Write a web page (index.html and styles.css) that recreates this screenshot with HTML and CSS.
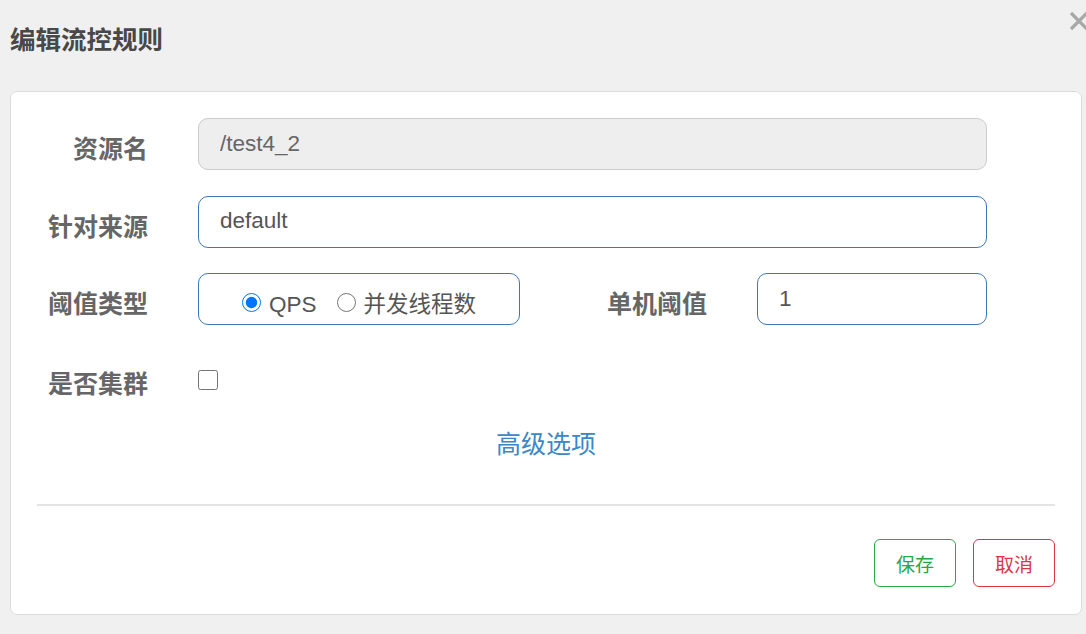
FILE: index.html
```html
<!DOCTYPE html>
<html lang="zh-CN">
<head>
<meta charset="utf-8">
<title>编辑流控规则</title>
<link rel="stylesheet" href="styles.css">
</head>
<body>
<div class="modal">
  <div class="modal-header">
    <h3 class="modal-title">编辑流控规则</h3>
    <button class="close" type="button" aria-label="关闭">
      <svg width="22" height="22" viewBox="0 0 22 22"><path d="M3 3L19 19M19 3L3 19" stroke="#a8a8a8" stroke-width="3.2" stroke-linecap="butt"/></svg>
    </button>
  </div>
  <div class="modal-body">
    <form class="rule-form">
      <div class="form-row">
        <label class="form-label">资源名</label>
        <input class="form-input wide" type="text" value="/test4_2" disabled>
      </div>
      <div class="form-row">
        <label class="form-label">针对来源</label>
        <input class="form-input wide active" type="text" value="default">
      </div>
      <div class="form-row">
        <label class="form-label">阈值类型</label>
        <div class="radio-group">
          <label class="radio"><input type="radio" name="grade" checked><span>QPS</span></label>
          <label class="radio"><input type="radio" name="grade"><span>并发线程数</span></label>
        </div>
        <label class="form-label second">单机阈值</label>
        <input class="form-input narrow active" type="text" value="1">
      </div>
      <div class="form-row check-row">
        <label class="form-label">是否集群</label>
        <input class="checkbox" type="checkbox">
      </div>
      <div class="advanced"><a href="#">高级选项</a></div>
    </form>
    <div class="divider"></div>
    <div class="actions">
      <button class="btn btn-save" type="button">保存</button>
      <button class="btn btn-cancel" type="button">取消</button>
    </div>
  </div>
</div>
</body>
</html>
```

FILE: styles.css
```css
html, body {
  margin: 0;
  padding: 0;
  background: #f0f0f0;
}

body {
  font-family: "Liberation Sans", "Noto Sans CJK SC", sans-serif;
  width: 1086px;
  height: 634px;
  overflow: hidden;
}

.modal {
  position: relative;
}

.modal-header {
  height: 91px;
  padding: 0 10px;
  box-sizing: border-box;
}

.modal-title {
  margin: 0;
  padding-top: 22px;
  font-size: 25.5px;
  line-height: 36px;
  font-weight: bold;
  color: #484848;
}

.close {
  position: absolute;
  top: 10px;
  right: -4px;
  padding: 0;
  border: 0;
  background: none;
  cursor: pointer;
}

.close svg {
  display: block;
}

.modal-body {
  margin: 0 4px 0 10px;
  height: 524px;
  box-sizing: border-box;
  background: #fff;
  border: 1px solid #dcdcdc;
  border-radius: 7px;
  padding: 26px 26px 0 26px;
}

.rule-form {
  margin: 0;
}

.form-row {
  display: flex;
  align-items: center;
  height: 52px;
  margin-bottom: 25.5px;
}

.form-label {
  width: 111px;
  margin-right: 50px;
  padding-top: 6px;
  text-align: right;
  font-size: 25px;
  font-weight: bold;
  color: #666;
  flex-shrink: 0;
}

.form-label.second {
  width: 153px;
  margin-left: 34px;
}

.form-input {
  height: 52px;
  box-sizing: border-box;
  border: 1px solid #ccc;
  border-radius: 10px;
  padding: 0 21px;
  padding-bottom: 1px;
  font-family: "Liberation Sans", "Noto Sans CJK SC", sans-serif;
  font-size: 22.5px;
  color: #555;
  background: #fff;
  outline: none;
}

.form-input:disabled {
  background: #eee;
  color: #666;
}

.form-input.active {
  border-color: #3a78b8;
}

.form-input.wide {
  width: 789px;
}

.form-input.narrow {
  width: 230px;
}

.radio-group {
  width: 322px;
  height: 52px;
  box-sizing: border-box;
  border: 1px solid #3a78b8;
  border-radius: 10px;
  display: flex;
  align-items: center;
  justify-content: center;
  gap: 20px;
  padding-top: 12px;
}

.radio {
  display: flex;
  align-items: center;
  gap: 8px;
  font-size: 22.5px;
  color: #555;
}

.radio input {
  width: 19px;
  height: 19px;
  margin: 0;
  position: relative;
  top: -3px;
}

.radio span {
  line-height: 30px;
}

.check-row {
  margin-top: 29px;
  margin-bottom: 0;
}

.check-row .form-label {
  padding-top: 3px;
}

.checkbox {
  width: 20px;
  height: 20px;
  margin: 0;
}

.advanced {
  text-align: center;
  margin-top: 23px;
  line-height: 30px;
}

.advanced a {
  font-size: 25px;
  color: #3a87c9;
  text-decoration: none;
}

.divider {
  height: 2px;
  background: #e4e4e4;
  margin-top: 41px;
}

.actions {
  display: flex;
  justify-content: flex-end;
  gap: 17px;
  margin-top: 33px;
}

.btn {
  width: 82px;
  height: 48px;
  box-sizing: border-box;
  background: #fff;
  border-radius: 6px;
  font-family: "Liberation Sans", "Noto Sans CJK SC", sans-serif;
  font-size: 19px;
  padding: 0;
  cursor: pointer;
}

.btn-save {
  border: 1px solid #2aa745;
  color: #2aa745;
}

.btn-cancel {
  border: 1px solid #dc3545;
  color: #dc3545;
}
```
